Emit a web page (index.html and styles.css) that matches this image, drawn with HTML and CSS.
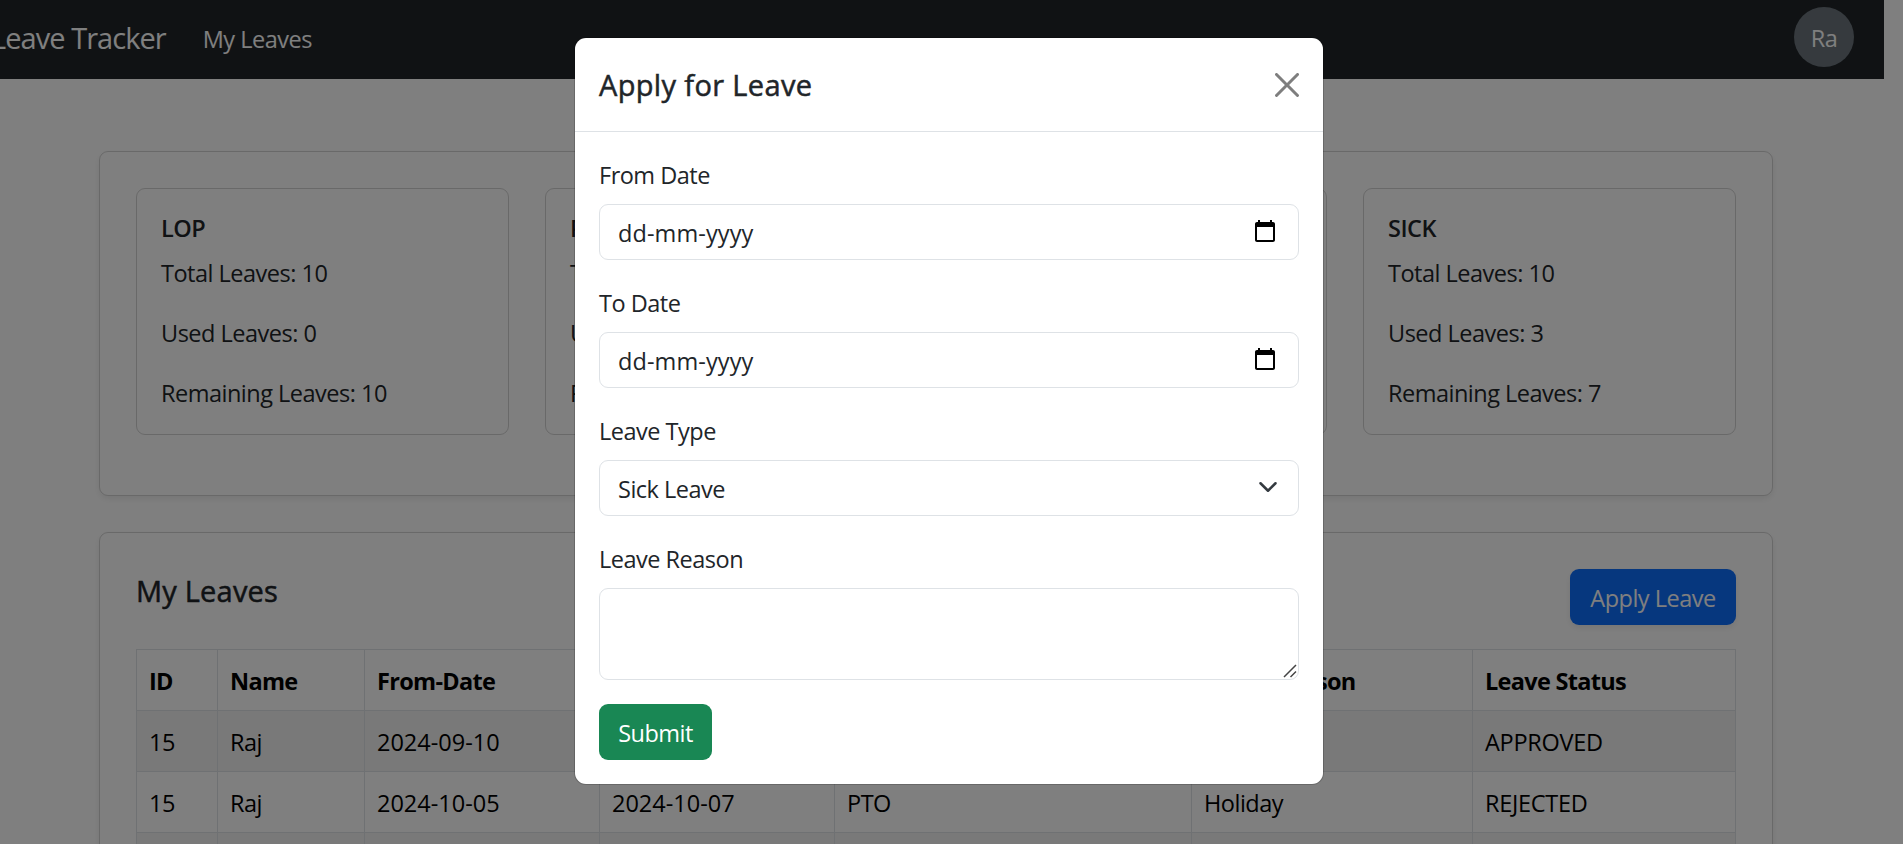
FILE: index.html
```html
<!DOCTYPE html>
<html lang="en">
<head>
<meta charset="utf-8">
<title>Leave Tracker</title>
<link rel="stylesheet" href="styles.css">
</head>
<body>
<div class="page">
  <nav class="navbar">
    <span class="brand">Leave Tracker</span>
    <a class="nav-link">My Leaves</a>
    <span class="avatar">Ra</span>
  </nav>
  <main class="container">
    <section class="card balances">
      <div class="card balance"><h6>LOP</h6><p>Total Leaves: 10</p><p>Used Leaves: 0</p><p>Remaining Leaves: 10</p></div>
      <div class="card balance"><h6>PTO</h6><p>Total Leaves: 10</p><p>Used Leaves: 0</p><p>Remaining Leaves: 10</p></div>
      <div class="card balance"></div>
      <div class="card balance"><h6>SICK</h6><p>Total Leaves: 10</p><p>Used Leaves: 3</p><p>Remaining Leaves: 7</p></div>
    </section>
    <section class="card leaves">
      <div class="leaves-head">
        <h5>My Leaves</h5>
        <button class="btn btn-primary">Apply Leave</button>
      </div>
      <table class="table">
        <colgroup><col class="c-id"><col class="c-name"><col class="c-from"><col class="c-to"><col class="c-type"><col class="c-reason"><col class="c-status"></colgroup>
        <thead><tr><th>ID</th><th>Name</th><th>From-Date</th><th></th><th></th><th>Leave Reason</th><th>Leave Status</th></tr></thead>
        <tbody>
          <tr><td>15</td><td>Raj</td><td class="day">2024-09-10</td><td></td><td></td><td></td><td class="status">APPROVED</td></tr>
          <tr><td>15</td><td>Raj</td><td class="day">2024-10-05</td><td class="day">2024-10-07</td><td>PTO</td><td>Holiday</td><td class="status">REJECTED</td></tr>
          <tr><td></td><td></td><td></td><td></td><td></td><td></td><td></td></tr>
        </tbody>
      </table>
    </section>
  </main>
</div>
<div class="backdrop">
  <div class="modal">
    <header class="modal-header">
      <h5>Apply for Leave</h5>
      <svg class="close" viewBox="0 0 16 16"><path d="M.293.293a1 1 0 0 1 1.414 0L8 6.586 14.293.293a1 1 0 1 1 1.414 1.414L9.414 8l6.293 6.293a1 1 0 0 1-1.414 1.414L8 9.414l-6.293 6.293a1 1 0 0 1-1.414-1.414L6.586 8 .293 1.707a1 1 0 0 1 0-1.414z"/></svg>
    </header>
    <form class="modal-body">
      <label>From Date</label>
      <div class="control"><span class="date">dd-mm-yyyy</span>
        <svg class="calendar" viewBox="0 0 24 24"><path d="M20 3h-1V1h-2v2H7V1H5v2H4c-1.100 0-2 .9-2 2v16c0 1.100.9 2 2 2h16c1.100 0 2-.9 2-2V5c0-1.100-.9-2-2-2zm0 18H4V8h16v13z"/></svg></div>
      <label>To Date</label>
      <div class="control"><span class="date">dd-mm-yyyy</span>
        <svg class="calendar" viewBox="0 0 24 24"><path d="M20 3h-1V1h-2v2H7V1H5v2H4c-1.100 0-2 .9-2 2v16c0 1.100.9 2 2 2h16c1.100 0 2-.9 2-2V5c0-1.100-.9-2-2-2zm0 18H4V8h16v13z"/></svg></div>
      <label>Leave Type</label>
      <div class="control"><span>Sick Leave</span>
        <svg class="chevron" viewBox="0 0 16 16"><path d="m2 5 6 6 6-6"/></svg></div>
      <label>Leave Reason</label>
      <div class="control area">
        <svg class="grip" viewBox="0 0 14 14"><path d="M1 13 13 1M7.500 13 13 7.500"/></svg></div>
      <button type="button" class="btn btn-success">Submit</button>
    </form>
  </div>
</div>
</body>
</html>
```
FILE: styles.css
```css
* { box-sizing: border-box; }
html { height: 100%; overflow: hidden; }
body {
  margin: 0;
  height: 100%;
  overflow: hidden;
  background: #fff;
  color: #212529;
  font-family: "Open Sans", "Noto Sans", sans-serif;
  font-size: 23.500px;
  line-height: 36px;
  letter-spacing: -0.500px;
}
h5, h6, p { margin: 0; }
h5 { font-size: 29px; font-weight: 500; -webkit-text-stroke: 0.500px currentColor; }
h6 { font-size: 23.500px; font-weight: 600; line-height: 29px; }
.page { height: 100%; overflow: hidden; }
.navbar {
  display: flex;
  align-items: center;
  width: 1884px;
  height: 79px;
  padding: 0 30px 5px 0;
  background: #212529;
  color: #fff;
}
.brand { margin-left: -9px; font-size: 29px; letter-spacing: -0.950px; padding-top: 2px; }
.nav-link { margin-left: 37px; padding-top: 3px; }
.avatar {
  display: flex;
  align-items: center;
  justify-content: center;
  width: 60px;
  height: 60px;
  padding-top: 2px;
  margin-left: auto;
  border-radius: 50%;
  background: #6c757d;
}
.container { width: 1674px; margin: 72px 0 0 99px; }
.card {
  border: 1px solid rgba(0, 0, 0, .175);
  border-radius: 9px;
}
.balances {
  display: grid;
  grid-template-columns: repeat(4, 373px);
  gap: 36px;
  height: 345px;
  padding: 36px;
  box-shadow: 0 3px 6px rgba(0, 0, 0, .075);
}
.balance { height: 247px; padding: 25px 24px 0; }
.balance h6 { margin-bottom: 12px; }
.balance p { height: 60px; }
.leaves {
  height: 500px;
  margin-top: 36px;
  padding: 36px;
  box-shadow: 0 3px 6px rgba(0, 0, 0, .075);
}
.leaves-head {
  display: flex;
  justify-content: space-between;
  height: 80px;
}
.leaves-head h5 { margin-top: 4px; letter-spacing: 0.200px; }
.btn {
  display: flex;
  align-items: center;
  justify-content: center;
  height: 56px;
  padding: 2px 0 0;
  border: 0;
  border-radius: 9px;
  color: #fff;
  font: inherit;
  letter-spacing: inherit;
}
.btn-primary { width: 166px; background: #0d6efd; box-shadow: 0 3px 6px rgba(0, 0, 0, .075); }
.btn-success { width: 113px; background: #198754; }
.table {
  width: 1599px;
  table-layout: fixed;
  border-collapse: collapse;
  color: #000;
}
.table th, .table td {
  height: 61px;
  padding: 2px 12px 0;
  border: 1px solid #dee2e6;
  text-align: left;
  white-space: nowrap;
}
.table th { font-weight: 700; letter-spacing: -0.700px; }
.table .day { letter-spacing: 0; }
.table .status { letter-spacing: -0.300px; }
.table tbody tr:nth-child(odd) { background: #f2f2f2; }
.c-id { width: 81px; }
.c-name { width: 147px; }
.c-from { width: 235px; }
.c-to { width: 235px; }
.c-type { width: 357px; }
.c-reason { width: 281px; }
.c-status { width: 263px; }
.backdrop {
  position: absolute;
  inset: 0;
  background: rgba(0, 0, 0, .5);
}
.modal {
  width: 748px;
  height: 746px;
  margin: 38px 0 0 575px;
  border-radius: 11px;
  background: #fff;
  box-shadow: 0 0 0 1px rgba(0, 0, 0, .175);
}
.modal-header {
  display: flex;
  align-items: center;
  justify-content: space-between;
  height: 94px;
  padding: 0 24px;
  border-bottom: 1px solid #dee2e6;
}
.modal-header h5 { letter-spacing: 0.350px; }
.close { width: 24px; height: 24px; opacity: .5; }
.modal-body { display: flex; flex-direction: column; align-items: flex-start; padding: 24px; }
.modal-body label { height: 48px; padding-top: 1px; }
.control {
  display: flex;
  align-items: center;
  justify-content: space-between;
  width: 700px;
  height: 56px;
  margin-bottom: 24px;
  padding: 2px 18px 0;
  border: 1px solid #dee2e6;
  border-radius: 9px;
}
.date { letter-spacing: 0.100px; }
.area { height: 92px; padding: 0 1px 1px; align-items: flex-end; justify-content: flex-end; }
.calendar { width: 24px; height: 24px; margin: 0 3px 4px 0; }
.chevron { width: 20px; height: 20px; margin: 0 2px 4px 0; fill: none; stroke: #343a40; stroke-width: 2; stroke-linecap: round; stroke-linejoin: round; }
.grip { width: 14px; height: 14px; fill: none; stroke: #444; stroke-width: 1.500; }
```
